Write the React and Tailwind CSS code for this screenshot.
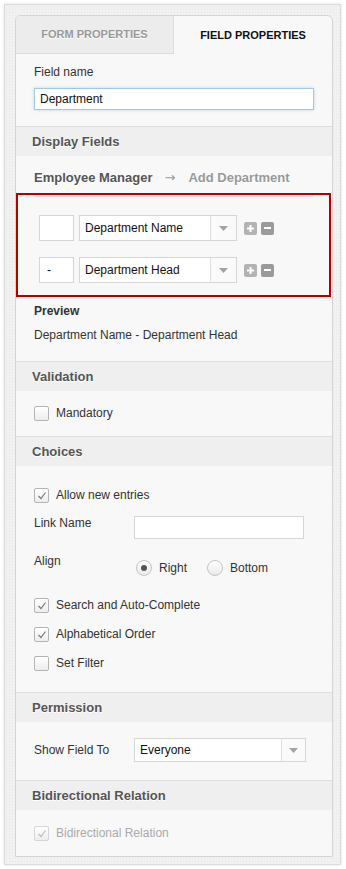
import React from 'react';

function Check({ checked = false, disabled = false }) {
  return (
    <span
      className={`flex h-[15px] w-[15px] shrink-0 items-center justify-center rounded-[2px] border bg-gradient-to-b from-white to-[#ededed] ${
        disabled ? 'border-[#d6d6d6]' : 'border-[#b4b4b4]'
      }`}
    >
      {checked && (
        <svg width="10" height="9" viewBox="0 0 10 9">
          <path d="M1.5 5 L4 7.5 L8.5 1.5" fill="none" stroke={disabled ? '#bdbdbd' : '#7a7a7a'} strokeWidth="1.2" />
        </svg>
      )}
    </span>
  );
}

function CheckRow({ label, checked, disabled }) {
  return (
    <div className="flex h-[15px] items-center gap-[7px]">
      <Check checked={checked} disabled={disabled} />
      <span className={`text-[12px] leading-[15px] ${disabled ? 'text-[#aaaaaa]' : 'text-[#333]'}`}>{label}</span>
    </div>
  );
}

function Radio({ on, label }) {
  return (
    <div className="flex h-[16px] items-center gap-[7px]">
      <span className="flex h-[16px] w-[16px] items-center justify-center rounded-full border border-[#c4c4c4] bg-gradient-to-b from-white to-[#eaeaea]">
        {on && <span className="h-[6px] w-[6px] rounded-full bg-[#555]" />}
      </span>
      <span className="text-[12px] leading-[16px] text-[#333]">{label}</span>
    </div>
  );
}

function Arrow() {
  return (
    <svg width="9" height="5" viewBox="0 0 9 5">
      <path d="M0 0 H9 L4.5 5 Z" fill="#a3a3a3" />
    </svg>
  );
}

function Select({ value, className, arrowW }) {
  return (
    <div className={`flex items-stretch border border-[#d6d6d6] bg-white ${className}`}>
      <span className="flex flex-1 items-center pl-[5px] text-[12px] text-[#111]">{value}</span>
      <span className={`flex items-center justify-center border-l border-[#e0e0e0] bg-[#fafafa] ${arrowW}`}>
        <Arrow />
      </span>
    </div>
  );
}

function Header({ children }) {
  return (
    <div className="flex h-[30px] items-center border-t border-[#dedede] bg-[#efefef] pl-[16px] text-[13px] font-bold text-[#555] [text-shadow:0_1px_0_#fff]">
      {children}
    </div>
  );
}

function FieldRow({ sep, value }) {
  return (
    <div className="flex items-center">
      <div className="ml-[21px] flex h-[26px] w-[35px] items-center border border-[#d6d6d6] bg-white pl-[7px] text-[12px] text-[#111]">
        {sep}
      </div>
      <Select value={value} className="ml-[5px] h-[26px] w-[158px]" arrowW="w-[26px]" />
      <span className="ml-[7px] flex h-[13px] w-[13px] items-center justify-center rounded-[2px] bg-[#b3b3b3]">
        <svg width="9" height="9" viewBox="0 0 9 9">
          <path d="M3.5 1h2v2.5H8v2H5.5V8h-2V5.5H1v-2h2.5z" fill="#fff" />
        </svg>
      </span>
      <span className="ml-[4px] flex h-[13px] w-[13px] items-center justify-center rounded-[2px] bg-[#9a9a9a]">
        <span className="h-[2px] w-[7px] bg-white" />
      </span>
    </div>
  );
}

export default function App() {
  return (
    <div className="min-h-[869px] bg-white p-[4px] pr-[5px] font-['Liberation_Sans',Arial,sans-serif]">
      <div className="w-[337px] border border-[#dcdcdc] bg-[#f1f1f1] bg-[radial-gradient(#e6e6e6_0.6px,transparent_0.8px)] bg-[length:3px_3px] pb-[7px] pl-[10px] pt-[10px] shadow-[0_0_3px_rgba(0,0,0,0.12)]">
        <div className="w-[318px] overflow-hidden rounded-t-[6px] border border-[#d4d4d4] bg-[#f8f8f8]">
          {/* tabs */}
          <div className="flex h-[38px]">
            <div className="flex w-[158px] items-center justify-center border-b border-r border-[#dcdcdc] bg-[#ececec] text-[11px] font-bold text-[#999] [text-shadow:0_1px_0_#fff]">
              FORM PROPERTIES
            </div>
            <div className="flex flex-1 items-center justify-center text-[11px] font-bold text-[#111]">
              FIELD PROPERTIES
            </div>
          </div>

          {/* field name */}
          <div className="px-[18px] pb-[16px] pt-[10px]">
            <div className="text-[12px] leading-[16px] text-[#333]">Field name</div>
            <div className="mt-[8px] flex h-[22px] w-[280px] items-center border border-[#a4c8e8] bg-white pl-[5px] text-[12px] text-[#111] shadow-[0_0_3px_rgba(110,170,230,0.45)]">
              Department
            </div>
          </div>

          <Header>Display Fields</Header>
          <div className="pb-[18px] pt-[14px]">
            <div className="flex h-[16px] items-center pl-[18px] text-[13px] font-bold leading-[16px] [text-shadow:0_1px_0_#fff]">
              <span className="text-[#555]">Employee Manager</span>
              <span className="ml-[12px] mr-[13px] font-['DejaVu_Sans',sans-serif] text-[13px] font-normal text-[#999]">→</span>
              <span className="text-[#999]">Add Department</span>
            </div>
            <div className="mr-[1px] mt-[7px] border-2 border-[#b30000] pb-[12px] pt-[1px]">
              <div className="mx-[16px] h-px bg-[#dedede]" />
              <div className="mt-[18px] flex flex-col gap-[16px]">
                <FieldRow sep="" value="Department Name" />
                <FieldRow sep="-" value="Department Head" />
              </div>
            </div>
            <div className="mt-[6px] pl-[18px] text-[12px] font-bold leading-[16px] text-[#333]">Preview</div>
            <div className="mt-[8px] pl-[18px] text-[12px] leading-[16px] text-[#333]">Department Name - Department Head</div>
          </div>

          <Header>Validation</Header>
          <div className="px-[18px] py-[15px]">
            <CheckRow label="Mandatory" />
          </div>

          <Header>Choices</Header>
          <div className="px-[18px] pb-[21px] pt-[22px]">
            <CheckRow label="Allow new entries" checked />
            <div className="mt-[12px] flex items-start">
              <span className="w-[100px] text-[12px] leading-[16px] text-[#333]">Link Name</span>
              <div className="mt-[1px] h-[23px] w-[170px] border border-[#d6d6d6] bg-white" />
            </div>
            <div className="mt-[14px] flex items-start">
              <span className="w-[102px] text-[12px] leading-[16px] text-[#333]">Align</span>
              <div className="mt-[7px] flex items-center gap-[20px]">
                <Radio on label="Right" />
                <Radio label="Bottom" />
              </div>
            </div>
            <div className="mt-[22px] flex flex-col gap-[14px]">
              <CheckRow label="Search and Auto-Complete" checked />
              <CheckRow label="Alphabetical Order" checked />
              <CheckRow label="Set Filter" />
            </div>
          </div>

          <Header>Permission</Header>
          <div className="flex items-center px-[18px] pb-[18px] pt-[16px]">
            <span className="w-[100px] text-[12px] text-[#333]">Show Field To</span>
            <Select value="Everyone" className="h-[24px] w-[172px]" arrowW="w-[24px]" />
          </div>

          <Header>Bidirectional Relation</Header>
          <div className="px-[18px] pb-[15px] pt-[16px]">
            <CheckRow label="Bidirectional Relation" checked disabled />
          </div>
        </div>
      </div>
    </div>
  );
}
